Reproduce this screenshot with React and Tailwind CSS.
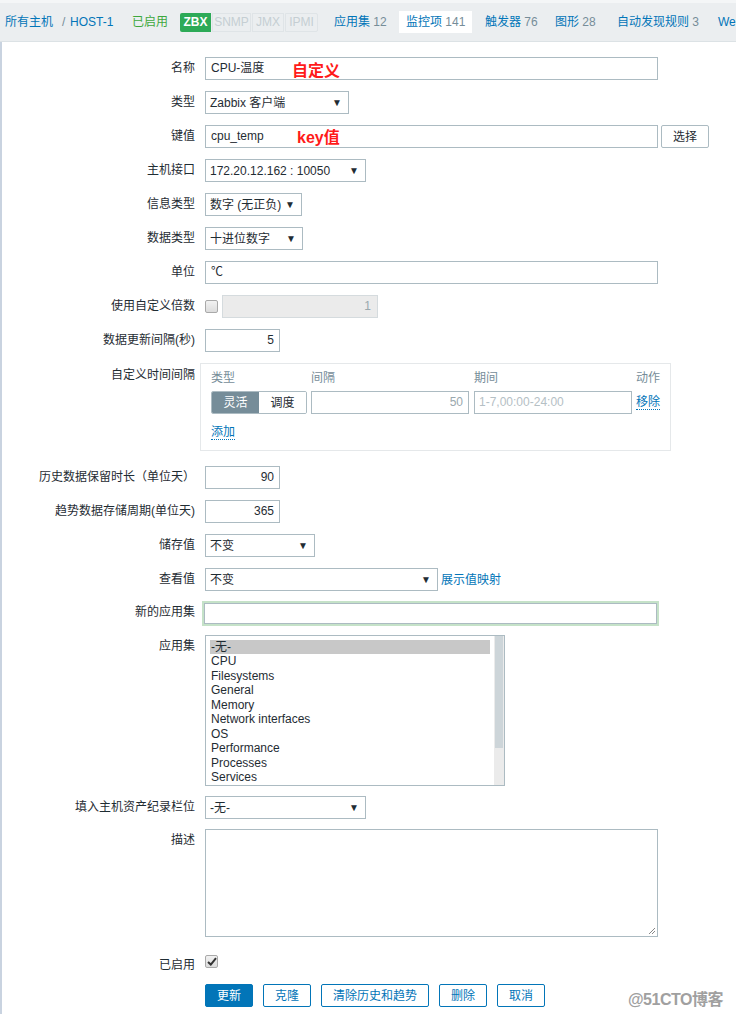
const font = { fontFamily: '"Liberation Sans", Arial, "Noto Sans CJK SC", sans-serif' };

const Label = ({ children, className = "" }) => (
  <div className={`w-[195px] shrink-0 text-right leading-[23px] ${className}`}>{children}</div>
);

const Row = ({ label, children, className = "", labelClass = "" }) => (
  <div className={`flex items-start gap-[10px] ${className}`}>
    <Label className={labelClass}>{label}</Label>
    <div className="flex items-center">{children}</div>
  </div>
);

const Box = ({ w, children, className = "" }) => (
  <div className={`h-[23px] border border-[#acbbc2] bg-white px-[5px] leading-[21px] ${w} ${className}`}>{children}</div>
);

const Select = ({ w, children }) => (
  <div className={`h-[23px] border border-[#acbbc2] bg-white pl-[4px] pr-[6px] flex items-center justify-between ${w}`}>
    <span>{children}</span>
    <span className="text-[10px] text-[#1f2c33]">▼</span>
  </div>
);

const Check = ({ checked }) => (
  <div className="w-[13px] h-[13px] border border-[#a9a9a9] rounded-[2px] bg-gradient-to-b from-[#f2f2f2] to-[#dcdcdc] flex items-center justify-center">
    {checked && (
      <svg width="10" height="9" viewBox="0 0 10 9">
        <path d="M1 5 L3.8 7.6 L9 1.2" stroke="#333" strokeWidth="2" fill="none" />
      </svg>
    )}
  </div>
);

const Btn = ({ children, w, primary }) => (
  <div
    className={`h-[23px] ${w} rounded-[2px] border border-[#0275b8] flex items-center justify-center ${
      primary ? "bg-[#0275b8] text-white" : "bg-white text-[#0275b8]"
    }`}
  >
    {children}
  </div>
);

const apps = ["CPU", "Filesystems", "General", "Memory", "Network interfaces", "OS", "Performance", "Processes", "Services"];

export default function App() {
  return (
    <div style={font} className="relative w-[736px] h-[1014px] overflow-hidden bg-white text-[12px] text-[#1f2c33]">
      {/* top tabs */}
      <div className="h-[42px] bg-[#ebeef0] border-t-[3px] border-t-[#f4f6f7] border-b border-b-[#dce2e5] flex items-center whitespace-nowrap pl-[5px]">
        <span className="w-[57px] shrink-0 text-[#0275b8]">所有主机</span>
        <span className="w-[8px] shrink-0 text-[#768d99]">/</span>
        <span className="w-[62px] shrink-0 text-[#0275b8]">HOST-1</span>
        <span className="w-[48px] shrink-0 text-[#3da83d]">已启用</span>
        <div className="w-[154px] shrink-0 flex h-[19px] text-[12px]">
          <span className="w-[31px] bg-[#2daa57] text-white font-bold flex items-center justify-center rounded-l-[2px]">ZBX</span>
          <span className="ml-[1px] w-[39px] border border-[#dfe4e7] text-[#c5ced3] flex items-center justify-center">SNMP</span>
          <span className="ml-[1px] w-[32px] border border-[#dfe4e7] text-[#c5ced3] flex items-center justify-center">JMX</span>
          <span className="ml-[1px] w-[33px] border border-[#dfe4e7] text-[#c5ced3] flex items-center justify-center rounded-r-[2px]">IPMI</span>
        </div>
        <span className="w-[65px] shrink-0 text-[#0275b8]">应用集 <span className="text-[#768d99]">12</span></span>
        <div className="w-[73px] shrink-0 h-[22px] bg-white flex items-center pl-[7px]">
          <span className="text-[#0275b8]">监控项 <span className="text-[#768d99]">141</span></span>
        </div>
        <span className="ml-[13px] w-[70px] shrink-0 text-[#0275b8]">触发器 <span className="text-[#768d99]">76</span></span>
        <span className="w-[62px] shrink-0 text-[#0275b8]">图形 <span className="text-[#768d99]">28</span></span>
        <span className="w-[101px] shrink-0 text-[#0275b8]">自动发现规则 <span className="text-[#768d99]">3</span></span>
        <span className="shrink-0 text-[#0275b8]">Web</span>
      </div>

      <div className="border-l-2 border-l-[#c9d3e0] h-full pt-[15px]">
        <div className="flex flex-col gap-[11px] -ml-[2px]">
          <Row label="名称">
            <div className="relative">
              <Box w="w-[453px]">CPU-温度</Box>
              <span className="absolute left-[87px] top-[2px] text-[16px] font-bold text-[#ff1a1a]">自定义</span>
            </div>
          </Row>
          <Row label="类型">
            <Select w="w-[144px]">Zabbix 客户端</Select>
          </Row>
          <Row label="键值">
            <div className="relative">
              <Box w="w-[453px]">cpu_temp</Box>
              <span className="absolute left-[92px] top-[1px] text-[16px] font-bold text-[#ff1a1a]">key值</span>
            </div>
            <div className="ml-[3px] h-[23px] w-[48px] border border-[#acbbc2] rounded-[2px] flex items-center justify-center">选择</div>
          </Row>
          <Row label="主机接口">
            <Select w="w-[161px]">172.20.12.162 : 10050</Select>
          </Row>
          <Row label="信息类型">
            <Select w="w-[97px]">数字 (无正负)</Select>
          </Row>
          <Row label="数据类型">
            <Select w="w-[98px]">十进位数字</Select>
          </Row>
          <Row label="单位">
            <Box w="w-[453px]">℃</Box>
          </Row>
          <Row label="使用自定义倍数">
            <Check />
            <div className="ml-[4px] h-[23px] w-[156px] border border-[#d5dbde] bg-[#ebebeb] text-right pr-[6px] leading-[21px] text-[#9aa8ae]">1</div>
          </Row>
          <Row label="数据更新间隔(秒)">
            <Box w="w-[75px]" className="text-right">5</Box>
          </Row>
          <Row label="自定义时间间隔" labelClass="mt-[1px]">
            <div className="-ml-[5px] w-[471px] h-[88px] border border-[#e5e8ea] pl-[10px] pt-[5px]">
              <div className="flex text-[#768d99] h-[18px] leading-[18px]">
                <span className="w-[100px]">类型</span>
                <span className="w-[163px]">间隔</span>
                <span className="w-[162px]">期间</span>
                <span>动作</span>
              </div>
              <div className="flex items-center mt-[4px]">
                <div className="flex h-[23px] border border-[#acbbc2] rounded-[2px] overflow-hidden">
                  <span className="w-[47px] bg-[#768d99] text-white flex items-center justify-center">灵活</span>
                  <span className="w-[47px] bg-white flex items-center justify-center">调度</span>
                </div>
                <div className="ml-[4px] h-[23px] w-[158px] border border-[#acbbc2] text-right pr-[5px] leading-[21px] text-[#9aa8ae]">50</div>
                <div className="ml-[5px] h-[23px] w-[158px] border border-[#acbbc2] pl-[4px] leading-[21px] text-[#b5c0c5]">1-7,00:00-24:00</div>
                <span className="ml-[4px] text-[#0275b8] border-b border-dotted border-[#0275b8] leading-[14px]">移除</span>
              </div>
              <div className="mt-[9px]">
                <span className="text-[#0275b8] border-b border-dotted border-[#0275b8]">添加</span>
              </div>
            </div>
          </Row>
          <Row label="历史数据保留时长（单位天）" className="mt-[4px]">
            <Box w="w-[75px]" className="text-right">90</Box>
          </Row>
          <Row label="趋势数据存储周期(单位天)">
            <Box w="w-[75px]" className="text-right">365</Box>
          </Row>
          <Row label="储存值">
            <Select w="w-[110px]">不变</Select>
          </Row>
          <Row label="查看值">
            <Select w="w-[233px]">不变</Select>
            <span className="ml-[3px] text-[#0275b8]">展示值映射</span>
          </Row>
          <Row label="新的应用集" className="-mt-[1px]">
            <div className="-ml-[3px] p-[2px] bg-[#c5e2c8]">
              <div className="h-[21px] w-[453px] border border-[#acbbc2] bg-white" />
            </div>
          </Row>
          <Row label="应用集" className="-mt-[2px]">
            <div className="h-[151px] w-[300px] border border-[#acbbc2] flex">
              <div className="flex-1 pl-[4px] pr-[4px] pt-[4px] leading-[14.45px]">
                <div className="bg-[#c8c8c8] pl-[1px]">-无-</div>
                {apps.map((a) => (
                  <div key={a} className="pl-[1px]">{a}</div>
                ))}
              </div>
              <div className="w-[10px] bg-[#ebebeb] flex flex-col">
                <div className="h-[112px] bg-[#cdd5d9] mx-[1px]" />
              </div>
            </div>
          </Row>
          <Row label="填入主机资产纪录栏位" className="-mt-[1px]">
            <Select w="w-[161px]">-无-</Select>
          </Row>
          <Row label="描述" className="-mt-[1px]">
            <div className="relative h-[108px] w-[453px] border border-[#acbbc2]">
              <svg className="absolute right-[1px] bottom-[1px]" width="8" height="8" viewBox="0 0 8 8">
                <path d="M7 1 L1 7 M7 4 L4 7" stroke="#888" strokeWidth="1" />
              </svg>
            </div>
          </Row>
          <Row label="已启用" className="mt-[6px] h-[17px]" labelClass="leading-[17px] h-[17px]">
            <div className="pt-[1px]">
              <Check checked />
            </div>
          </Row>
          <div className="flex gap-[10px] ml-[205px] mt-[2px]">
            <Btn w="w-[48px]" primary>更新</Btn>
            <Btn w="w-[48px]">克隆</Btn>
            <Btn w="w-[108px]">清除历史和趋势</Btn>
            <Btn w="w-[48px]">删除</Btn>
            <Btn w="w-[48px]">取消</Btn>
          </div>
        </div>
      </div>

      <span className="absolute left-[628px] top-[988px] text-[16px] font-bold text-[#a0a0a0] tracking-[-0.5px]">@51CTO博客</span>
    </div>
  );
}
